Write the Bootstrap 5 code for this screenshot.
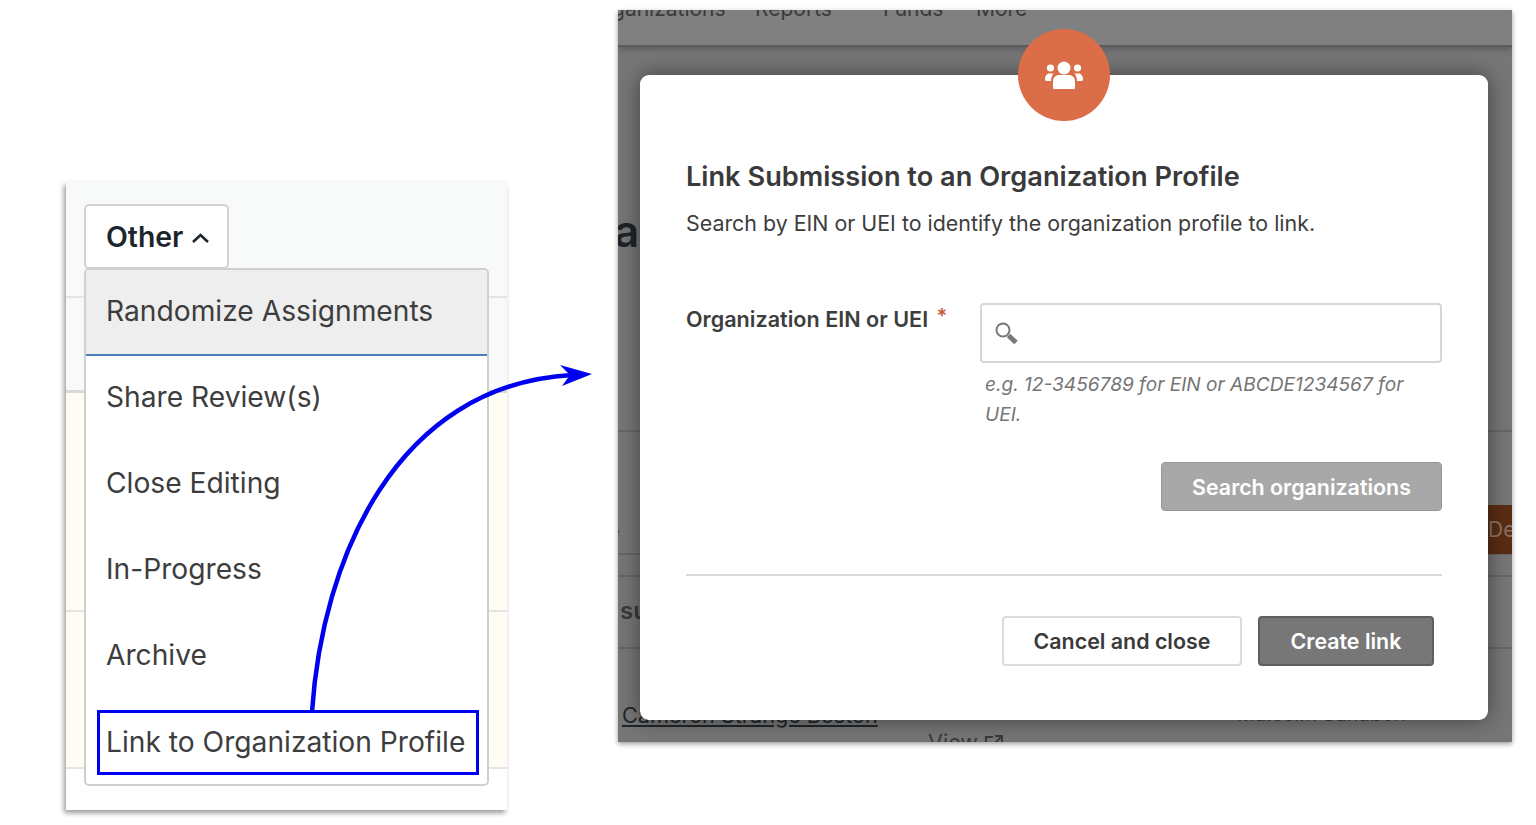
<!DOCTYPE html>
<html lang="en">
<head>
  <title>Link to Organization Profile</title>
  <meta charset="utf-8">
  <meta name="viewport" content="width=device-width, initial-scale=1">
  <link href="https://cdn.jsdelivr.net/npm/bootstrap@5.3.1/dist/css/bootstrap.min.css" rel="stylesheet">
  <script src="https://cdn.jsdelivr.net/npm/bootstrap@5.3.1/dist/js/bootstrap.bundle.min.js"></script>
  <style>
    body {
      font-family: "Inter", "Lato", "Liberation Sans", sans-serif;
      background: #fff;
      color: #3d3d3d;
      overflow: hidden;
    }

    .canvas {
      position: relative;
      width: 1536px;
      height: 825px;
    }

    /* left shot: the open "Other" menu */
    .menu-shot {
      position: absolute;
      left: 66px;
      top: 182px;
      width: 441px;
      height: 628px;
      background: #fff;
      box-shadow: -2px 3px 5px rgba(0, 0, 0, .4);
      overflow: hidden;
    }

    .band-top { height: 116px; background: #f8f9f9; border-bottom: 2px solid #e4e4e4; }
    .band-mid { height: 95px; background: #f8f9f9; border-bottom: 3px solid #d9d9d9; }
    .band-cream { height: 219px; background: #fffdf3; border-bottom: 2px solid #e4e4e4; }
    .band-cream-b { height: 157px; background: #fffdf3; border-bottom: 2px solid #e4e4e4; }

    .other-btn {
      position: absolute;
      left: 18px;
      top: 22px;
      width: 145px;
      height: 65px;
      background: #fff;
      border: 2px solid #d2d2d2;
      border-radius: 5px;
      font-size: 28.4px;
      font-weight: 600;
      color: #1d252c;
      padding: 2px 0 0 20px;
      gap: 8px;
    }

    .other-list {
      position: absolute;
      left: 18px;
      top: 86px;
      width: 405px;
      background: #fff;
      border: 2px solid #cfcfcf;
      border-radius: 5px;
      overflow: hidden;
    }

    .other-list .list-group-item {
      height: 86px;
      padding: 0 0 3px 20px;
      border: 0;
      border-radius: 0;
      background: transparent;
      color: #3d3d3d;
      font-size: 28.2px;
      white-space: nowrap;
      display: flex;
      align-items: center;
    }

    .other-list .list-group-item.is-hover {
      background: #eeeeee;
      border-bottom: 2px solid #4a7fb5;
      height: 86px;
      padding-bottom: 1px;
    }

    .other-list .list-group-item:last-child {
      height: 84px;
      padding-bottom: 0;
    }

    .blue-frame {
      position: absolute;
      left: 31px;
      top: 528px;
      width: 382px;
      height: 65px;
      border: 3px solid #0000f0;
    }

    /* right shot: modal over a dimmed page */
    .modal-shot {
      position: absolute;
      left: 618px;
      top: 10px;
      width: 894px;
      height: 732px;
      background: #767676;
      box-shadow: 0 2px 5px rgba(0, 0, 0, .4);
      overflow: hidden;
    }

    .dim-nav {
      height: 35px;
      background: #808080;
      border-bottom: 2px solid #5c5c5c;
      box-shadow: 0 2px 6px rgba(0, 0, 0, .25);
      box-sizing: content-box;
    }

    .dim-text {
      position: absolute;
      color: #3a3a3a;
      white-space: nowrap;
    }

    .dim-line {
      position: absolute;
      left: 0;
      width: 100%;
      height: 2px;
      background: #666;
    }

    .dim-btn {
      position: absolute;
      left: 870px;
      top: 495px;
      width: 24px;
      height: 49px;
      background: #5a2c14;
      color: #8b7468;
      font-size: 21px;
      line-height: 49px;
      overflow: hidden;
    }

    .link-modal {
      position: absolute;
      left: 22px;
      top: 65px;
      width: 848px;
      height: 645px;
      background: #fff;
      border-radius: 9px;
      box-shadow: 0 0 22px rgba(0, 0, 0, .45);
      padding: 84px 46px 0;
    }

    .badge-circle {
      position: absolute;
      left: 378px;
      top: -46px;
      width: 92px;
      height: 92px;
      border-radius: 50%;
      background: #db6d49;
    }

    .modal-title-text {
      font-size: 27.2px;
      font-weight: 600;
      line-height: 36px;
      color: #3a3a3a;
      margin: 0;
    }

    .modal-sub {
      font-size: 21.4px;
      line-height: 30px;
      margin: 13px 0 0;
    }

    .field-row { margin-top: 65px; }

    .field-label {
      width: 294px;
      font-size: 21.6px;
      font-weight: 600;
      line-height: 30px;
      margin-top: -2px;
      white-space: nowrap;
    }

    .req-star { color: #c8593a; font-size: 20px; vertical-align: 4px; margin-left: 3px; }

    .field-box { width: 462px; }

    .search-box {
      height: 60px;
      border: 2px solid #d6d6d6;
      border-radius: 4px;
      padding-left: 12px;
    }

    .field-help {
      font-size: 19.1px;
      font-style: italic;
      line-height: 30px;
      color: #757575;
      padding: 6px 20px 0 5px;
    }

    .btn-search {
      width: 281px;
      height: 49px;
      margin-top: 33px;
      background: #a8a8a8;
      border: 1px solid #959595;
      border-radius: 4px;
      color: #fff;
      font-size: 21.4px;
      font-weight: 600;
      padding: 2px 0 0;
    }

    .modal-rule {
      margin: 63px 0 0;
      border: 0;
      border-top: 2px solid #d9d9d9;
      opacity: 1;
    }

    .foot-row { margin-top: 40px; padding-right: 8px; gap: 16px; }

    .btn-cancel, .btn-create {
      height: 50px;
      border-radius: 4px;
      font-size: 21.4px;
      font-weight: 600;
      padding: 0;
    }

    .btn-cancel { width: 240px; background: #fff; border: 2px solid #dcdcdc; color: #3a3a3a; }
    .btn-create { width: 176px; background: #777; border: 2px solid #5f5f5f; color: #fff; }

    .arrow-layer {
      position: absolute;
      left: 0;
      top: 0;
      pointer-events: none;
    }
  </style>
</head>
<body>

<div class="canvas">

  <!-- left shot -->
  <div class="menu-shot">
    <div class="band-top"></div>
    <div class="band-mid"></div>
    <div class="band-cream"></div>
    <div class="band-cream-b"></div>

    <button class="other-btn d-flex align-items-center" type="button">
      Other
      <svg width="19" height="12" viewBox="0 0 19 12"><path d="M2 10 L9.5 3 L17 10" fill="none" stroke="#1d252c" stroke-width="2.6"/></svg>
    </button>

    <div class="list-group other-list">
      <a class="list-group-item is-hover">Randomize Assignments</a>
      <a class="list-group-item">Share Review(s)</a>
      <a class="list-group-item">Close Editing</a>
      <a class="list-group-item">In-Progress</a>
      <a class="list-group-item">Archive</a>
      <a class="list-group-item">Link to Organization Profile</a>
    </div>
    <div class="blue-frame"></div>
  </div>

  <!-- right shot -->
  <div class="modal-shot">
    <div class="dim-nav"></div>
    <span class="dim-text" style="left:-6px;top:-17px;font-size:21px">ganizations</span>
    <span class="dim-text" style="left:137px;top:-17px;font-size:21px">Reports</span>
    <span class="dim-text" style="left:265px;top:-17px;font-size:21px">Funds</span>
    <span class="dim-text" style="left:358px;top:-17px;font-size:21px">More</span>
    <span class="dim-text" style="left:-4px;top:188px;font-size:44px;font-weight:600;color:#1f2327">a</span>
    <span class="dim-text" style="left:-10px;top:506px;font-size:20px">e</span>
    <span class="dim-text" style="left:2px;top:583px;font-size:24px;font-weight:600">su</span>
    <span class="dim-text text-decoration-underline" style="left:4px;top:689px;font-size:21.6px;color:#20262c">Cameron Strange Boston</span>
    <span class="dim-text" style="left:619px;top:689px;font-size:20px">Malcolm Sanabon</span>
    <span class="dim-text" style="left:310px;top:716px;font-size:21.6px">View
      <svg width="20" height="20" viewBox="0 0 20 20" fill="none" stroke="#3a3a3a" stroke-width="2"><path d="M9 3 H2 V18 H17 V11 M11 2 H18 V9 M18 2 L9 11"/></svg>
    </span>
    <div class="dim-line" style="top:420px"></div>
    <div class="dim-line" style="top:543px"></div>
    <div class="dim-line" style="top:565px"></div>
    <div class="dim-line" style="top:637px"></div>
    <div class="dim-btn">De</div>

    <div class="link-modal">
      <div class="badge-circle d-flex align-items-center justify-content-center">
        <svg width="38" height="28" viewBox="0 0 38 28" fill="#fff">
          <circle cx="19" cy="7" r="6.5"/>
          <circle cx="5.5" cy="7" r="3.6"/>
          <circle cx="32.5" cy="7" r="3.6"/>
          <path d="M8 27 V21 C8 16 11 14 14 14 H24 C27 14 30 16 30 21 V27 C30 27.6 29.6 28 29 28 H9 C8.4 28 8 27.6 8 27 Z"/>
          <path d="M0 18 C0 15 2 12.5 4.5 12.5 H8.5 C7 14.5 6 17 6 20 H1.5 C.5 20 0 19 0 18 Z"/>
          <path d="M38 18 C38 15 36 12.5 33.5 12.5 H29.5 C31 14.5 32 17 32 20 H36.5 C37.5 20 38 19 38 18 Z"/>
        </svg>
      </div>

      <h2 class="modal-title-text">Link Submission to an Organization Profile</h2>
      <p class="modal-sub">Search by EIN or UEI to identify the organization profile to link.</p>

      <div class="d-flex field-row">
        <label class="field-label">Organization EIN or UEI <span class="req-star">*</span></label>
        <div class="field-box">
          <div class="search-box d-flex align-items-center">
            <svg width="25" height="25" viewBox="0 0 25 25" fill="none">
              <circle cx="9" cy="9" r="6.5" stroke="#777" stroke-width="2"/>
              <path d="M14.5 14.5 L22 21.5" stroke="#777" stroke-width="5"/>
            </svg>
          </div>
          <div class="field-help">e.g. 12-3456789 for EIN or ABCDE1234567 for UEI.</div>
        </div>
      </div>

      <div class="d-flex justify-content-end">
        <button class="btn btn-search" type="button">Search organizations</button>
      </div>

      <hr class="modal-rule">

      <div class="d-flex justify-content-end foot-row">
        <button class="btn btn-cancel" type="button">Cancel and close</button>
        <button class="btn btn-create" type="button">Create link</button>
      </div>
    </div>
  </div>

  <!-- connector from the menu item to the modal -->
  <svg class="arrow-layer" width="1536" height="825" viewBox="0 0 1536 825" fill="none">
    <path d="M312 712 C322 560 395 385 572 375" stroke="#0000f0" stroke-width="4.5"/>
    <path d="M560 365 L592 374 L562 386 L570 375 Z" fill="#0000f0"/>
  </svg>

</div>

</body>
</html>
